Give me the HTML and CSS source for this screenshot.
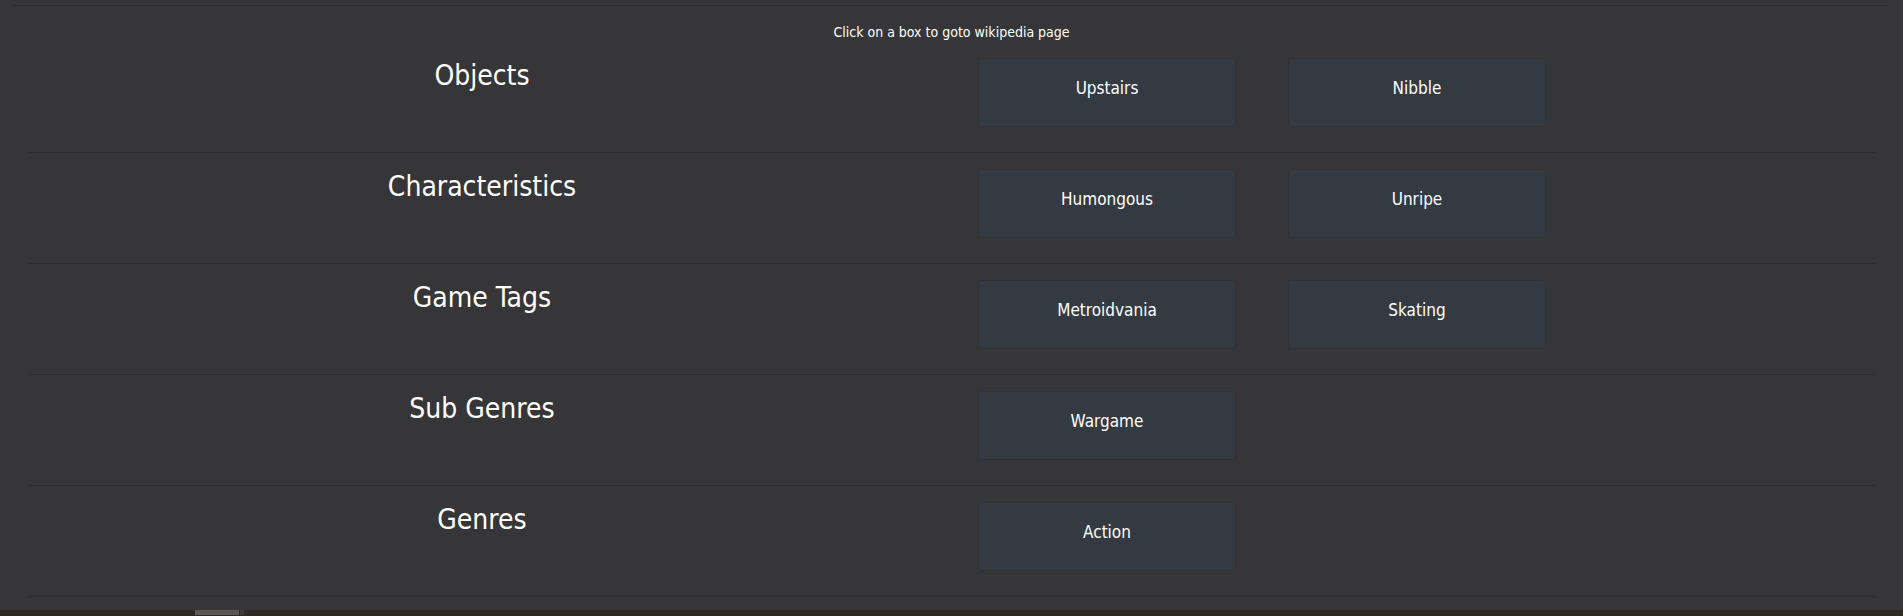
FILE: index.html
```html
<!DOCTYPE html>
<html lang="en">
<head>
<meta charset="utf-8">
<title>Tags</title>
<link rel="stylesheet" href="styles.css">
</head>
<body>
<div class="page">
  <div class="topline"></div>
  <p class="caption">Click on a box to goto wikipedia page</p>
  <div class="rows">
    <section class="row">
      <h2 class="row-title">Objects</h2>
      <div class="boxes">
        <a class="box">Upstairs</a>
        <a class="box">Nibble</a>
      </div>
    </section>
    <section class="row">
      <h2 class="row-title">Characteristics</h2>
      <div class="boxes">
        <a class="box">Humongous</a>
        <a class="box">Unripe</a>
      </div>
    </section>
    <section class="row">
      <h2 class="row-title">Game Tags</h2>
      <div class="boxes">
        <a class="box">Metroidvania</a>
        <a class="box">Skating</a>
      </div>
    </section>
    <section class="row">
      <h2 class="row-title">Sub Genres</h2>
      <div class="boxes">
        <a class="box">Wargame</a>
      </div>
    </section>
    <section class="row">
      <h2 class="row-title">Genres</h2>
      <div class="boxes">
        <a class="box">Action</a>
      </div>
    </section>
  </div>
</div>
<div class="footer-strip">
  <span class="strip-block"></span>
  <span class="strip-notch"></span>
</div>
</body>
</html>
```
FILE: styles.css
```css
html, body {
  margin: 0;
  padding: 0;
}
body {
  background: #2d2a24;
  font-family: "DejaVu Sans Condensed", "DejaVu Sans", sans-serif;
  color: #ffffff;
  overflow: hidden;
}
.page {
  background: #363638;
  padding-top: 5px;
  padding-bottom: 13px;
}
.topline {
  height: 1px;
  margin: 0 14px 0 13px;
  background: #2c2c2e;
}
.caption {
  margin: 0;
  height: 36px;
  box-sizing: border-box;
  padding-top: 19px;
  font-size: 14px;
  line-height: 15px;
  text-align: center;
}
.rows {
  margin: 0 28px 0 29px;
}
.row {
  display: grid;
  grid-template-columns: 906px 1fr;
  padding: 16px 0 25px;
  border-bottom: 1px solid #2c2c2e;
}
.row-title {
  margin: 1px 0 0;
  font-weight: normal;
  font-size: 28px;
  text-align: center;
}
.boxes {
  display: flex;
  gap: 52px;
  padding-left: 43px;
}
.box {
  display: block;
  box-sizing: border-box;
  width: 258px;
  height: 69px;
  padding-top: 19px;
  background: #343a42;
  border: 1px solid #2f3339;
  border-radius: 3px;
  font-size: 17px;
  text-align: center;
  cursor: pointer;
}
.footer-strip {
  display: flex;
  height: 5px;
  padding-left: 195px;
}
.strip-block {
  width: 44px;
  background: #5a5854;
}
.strip-notch {
  width: 4px;
  margin-left: 1px;
  background: #3e3c38;
}
```
